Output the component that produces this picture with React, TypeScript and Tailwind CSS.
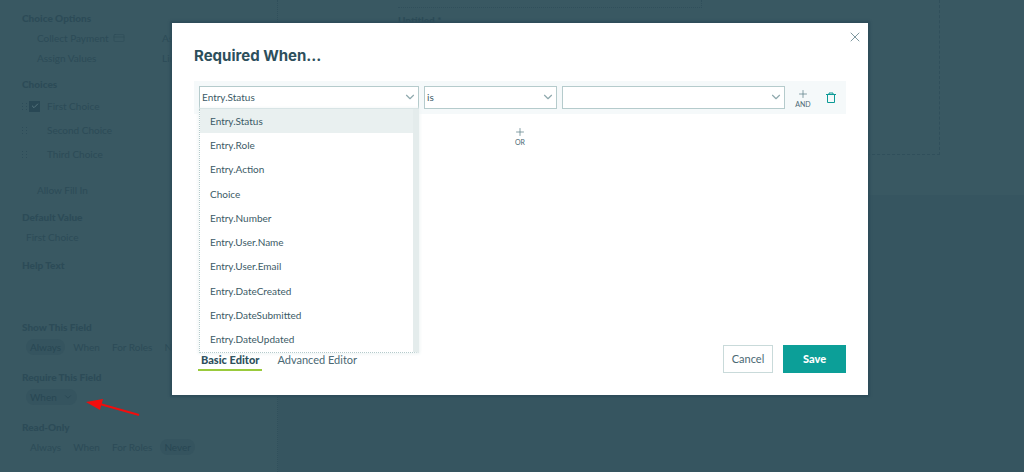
import { useState } from 'react';
import { Check, ChevronDown, CreditCard, Plus, X } from 'lucide-react';

const FIELDS = [
  'Entry.Status',
  'Entry.Role',
  'Entry.Action',
  'Choice',
  'Entry.Number',
  'Entry.User.Name',
  'Entry.User.Email',
  'Entry.DateCreated',
  'Entry.DateSubmitted',
  'Entry.DateUpdated',
];

const MODES = ['Always', 'When', 'For Roles', 'Never'];

function ModeRow({ active }: { active: string }) {
  return (
    <div className="flex h-5 items-center gap-1 pl-1">
      {MODES.map((mode) => (
        <button
          key={mode}
          type="button"
          className={`flex h-4 items-center rounded-full px-1 whitespace-nowrap ${mode === active ? 'bg-[#35545f] text-[#284753]' : ''}`}
        >
          {mode}
        </button>
      ))}
    </div>
  );
}

function ChoiceRow({ label, checked }: { label: string; checked?: boolean }) {
  return (
    <label className="flex h-6 items-center">
      <span className="grid w-[5px] grid-cols-2 gap-[2px]">
        {[0, 1, 2, 3, 4, 5].map((dot) => (
          <span key={dot} className="size-px bg-[#2d4c59]" />
        ))}
      </span>
      <span className="relative ml-[2px] flex size-[11px] items-center justify-center">
        <input
          type="checkbox"
          defaultChecked={checked}
          className="absolute inset-0 appearance-none checked:bg-[#294855]"
        />
        {checked && <Check className="relative size-2 text-[#55747d]" strokeWidth={3} />}
      </span>
      <span className="ml-[7px]">{label}</span>
    </label>
  );
}

function Sidebar() {
  return (
    <aside className="w-[278px] shrink-0 overflow-hidden border-r border-dotted border-[#304f5b] pt-2 pb-3 pl-[22px] leading-5">
      <h2 className="font-black">Choice Options</h2>
      <div className="grid grid-cols-[125px_1fr] pl-[15px] whitespace-nowrap">
        <span className="flex items-center gap-1">
          Collect Payment <CreditCard className="size-3" strokeWidth={1} />
        </span>
        <span>Assign</span>
        <span>Assign Values</span>
        <span>Limit</span>
      </div>

      <h2 className="mt-1.5 font-black">Choices</h2>
      <ChoiceRow label="First Choice" checked />
      <ChoiceRow label="Second Choice" />
      <ChoiceRow label="Third Choice" />
      <p className="mt-3.5 pl-[15px]">Allow Fill In</p>

      <h2 className="mt-[7px] font-black">Default Value</h2>
      <p className="pl-1">First Choice</p>

      <h2 className="mt-2 font-black">Help Text</h2>

      <h2 className="mt-[42px] font-black">Show This Field</h2>
      <ModeRow active="Always" />

      <h2 className="mt-2.5 font-black">Require This Field</h2>
      <div className="relative flex h-5 items-center pl-1">
        <button type="button" className="flex h-4 items-center gap-1.5 rounded-full bg-[#35545f] px-1 text-[#284753]">
          When <ChevronDown className="size-2.5" strokeWidth={2} />
        </button>
        <svg className="absolute top-3 left-16 h-5 w-14" viewBox="0 0 56 20" fill="none">
          <path d="M14 5 L53 16" stroke="#f20d0d" strokeWidth="2" />
          <path d="M0 3 L17 0 L14 11 Z" fill="#f20d0d" />
        </svg>
      </div>

      <h2 className="mt-2.5 font-black">Read-Only</h2>
      <ModeRow active="Never" />
    </aside>
  );
}

function Canvas() {
  return (
    <main className="flex-1 bg-[#365560]">
      <div className="h-[195px] bg-[#395862]">
        <div className="mr-[84px] h-[155px] border-r border-b border-dashed border-[#304f5b] pl-[120px]">
          <div className="h-2 w-[304px] border-r border-b border-dotted border-[#304f5b]" />
          <p className="pt-1 leading-4 font-black">Untitled *</p>
        </div>
      </div>
    </main>
  );
}

function Dropdown({ label, options, className }: { label: string; options: string[]; className: string }) {
  return (
    <div className={`relative ${className}`}>
      <select
        aria-label={label}
        className="block h-[23px] w-full appearance-none border border-[#b5cbcc] bg-white pl-[2px] text-[#3b5a66] outline-none"
      >
        {options.map((option) => (
          <option key={option}>{option}</option>
        ))}
      </select>
      <ChevronDown
        className="pointer-events-none absolute top-1 right-0.5 size-3.5 text-[#8fa9ae]"
        strokeWidth={2}
      />
    </div>
  );
}

function AddButton({ label }: { label: string }) {
  return (
    <button type="button" className="flex w-[26px] flex-col items-center text-[7px] leading-2 text-[#4a6873]">
      <Plus className="size-3 text-[#5f8289]" strokeWidth={1.5} />
      {label}
    </button>
  );
}

function TrashIcon() {
  return (
    <svg className="h-3 w-2.5" viewBox="0 0 10 12" fill="none" stroke="#0c9a96">
      <path d="M0 2.5H10M3 2V1H7V2M1.5 3V10.5H8.5V3" />
    </svg>
  );
}

export default function App() {
  const [selected, setSelected] = useState('Entry.Status');
  const [tab, setTab] = useState('Basic Editor');

  return (
    <div className="relative min-h-screen overflow-hidden bg-[#395862] font-['Lato','Noto_Sans',sans-serif] text-[10px] text-[#2c4b57]">
      <div className="flex min-h-screen">
        <Sidebar />
        <Canvas />
      </div>

      <div className="absolute inset-0 flex items-start justify-center pt-[23px] pl-4">
        <section
          role="dialog"
          aria-labelledby="dialog-title"
          className="relative w-full max-w-[696px] bg-white px-[22px] pb-[22px] shadow-[0_0_2px_2px_#2d4c59]"
        >
          <button type="button" aria-label="Close" className="absolute top-1.5 right-[5px] text-[#7f989f]">
            <X className="size-4" strokeWidth={1.5} />
          </button>
          <h1
            id="dialog-title"
            className="pt-[21px] pb-[13px] font-['Inter',sans-serif] text-[15px] leading-6 font-bold text-[#2d4f5c]"
          >
            Required When...
          </h1>

          <div className="min-h-[264px]">
            <div className="flex items-center gap-[5px] bg-[#f5f9fa] p-[5px]">
              <div className="relative w-[220px]">
                <Dropdown label="Field" options={FIELDS} className="w-full" />
                <ul
                  role="listbox"
                  aria-label="Field options"
                  className="absolute top-full left-0 flex h-[244px] w-full flex-col border border-t-0 border-dotted border-[#b5cbcc] border-r-[6px] border-r-[#e4ecec] bg-white text-[#3b5a66] shadow-[0_0_3px_1px_#eef4f4] [border-right-style:solid]"
                >
                  {FIELDS.map((field) => (
                    <li
                      key={field}
                      role="option"
                      aria-selected={field === selected}
                      onClick={() => setSelected(field)}
                      className={`flex flex-1 items-center pl-2.5 ${field === selected ? 'bg-[#e9f0f0]' : ''}`}
                    >
                      {field}
                    </li>
                  ))}
                </ul>
              </div>
              <Dropdown label="Operator" options={['is', 'is not']} className="w-[133px]" />
              <Dropdown label="Value" options={['']} className="flex-1" />
              <AddButton label="AND" />
              <button type="button" aria-label="Delete" className="flex w-5 justify-center">
                <TrashIcon />
              </button>
            </div>
            <div className="flex justify-center pt-3">
              <AddButton label="OR" />
            </div>
          </div>

          <footer className="flex items-end text-[11px] text-[#4a6873]">
            <div className="flex gap-3 pb-[2px] pl-1 leading-4">
              {['Basic Editor', 'Advanced Editor'].map((name) => (
                <button
                  key={name}
                  type="button"
                  onClick={() => setTab(name)}
                  className={`border-b-2 px-[3px] pb-px ${tab === name ? 'border-[#9aca3c] font-black text-[#2d4f5c]' : 'border-transparent'}`}
                >
                  {name}
                </button>
              ))}
            </div>
            <div className="ml-auto flex gap-2.5">
              <button type="button" className="h-7 w-[50px] border border-[#c9dada]">
                Cancel
              </button>
              <button type="button" className="h-7 w-[63px] bg-[#0c9f98] font-black text-white">
                Save
              </button>
            </div>
          </footer>
        </section>
      </div>
    </div>
  );
}
